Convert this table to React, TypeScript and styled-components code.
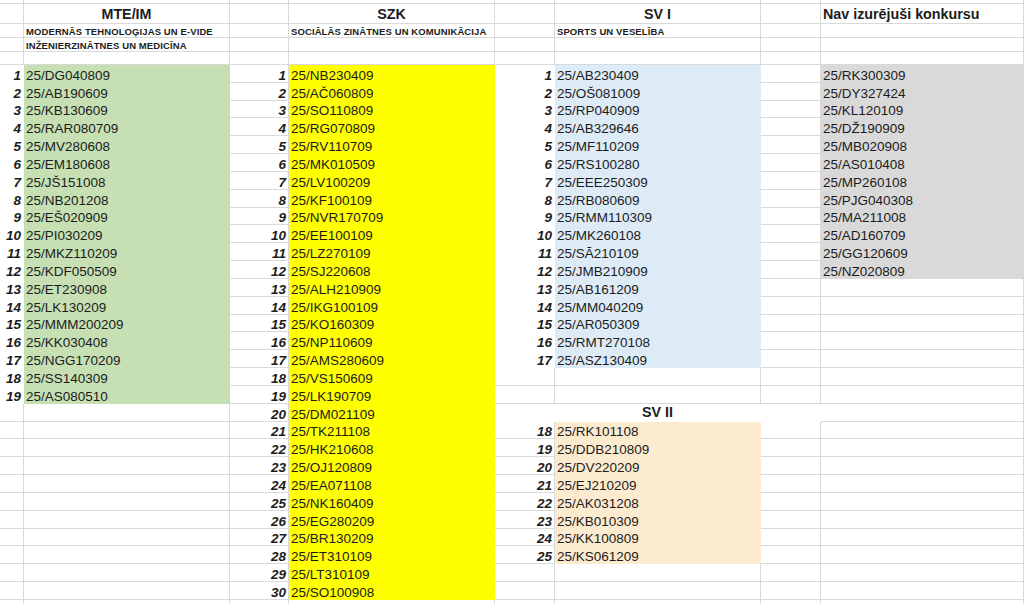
import React from 'react';
import styled, { createGlobalStyle, css } from 'styled-components';

const Global = createGlobalStyle`
  html, body { margin: 0; padding: 0; background: #ffffff; }
  body {
    width: 1024px;
    height: 604px;
    overflow: hidden;
    font-family: "Liberation Sans", Arial, sans-serif;
    color: #1c1c1c;
  }
`;

const GRID = '#d9d9d9';
const GREEN = '#c6e0b4';
const YELLOW = '#ffff00';
const BLUE = '#ddebf7';
const PEACH = '#fdebd0';
const GRAY = '#d9d9d9';
const WHITE = '#ffffff';

type Kind = 'blank' | 'code' | 'num' | 'title' | 'sub';

const Sheet = styled.div`
  display: grid;
  grid-template-columns: 24px 206px 59px 206px 60px 206px 60px 203px;
  grid-template-rows: 4px 20px 13.7px 14px 13.3px repeat(31, 17.83px);
  width: 1024px;
`;

const kindStyles: Record<Kind, ReturnType<typeof css>> = {
  blank: css``,
  code: css`
    font-size: 13.5px;
    line-height: 13px;
    padding-left: 2px;
  `,
  num: css`
    font-size: 13.5px;
    line-height: 13px;
    font-weight: 700;
    font-style: italic;
    padding-right: 2px;
  `,
  title: css`
    font-size: 14.3px;
    line-height: 16px;
    font-weight: 700;
    padding: 0 2px 1px 2px;
  `,
  sub: css`
    font-size: 9.5px;
    line-height: 11px;
    font-weight: 700;
    letter-spacing: 0.1px;
    padding-left: 2px;
  `,
};

const Cell = styled.div<{ $fill?: string; $kind: Kind; $center?: boolean }>`
  box-sizing: border-box;
  display: flex;
  align-items: flex-end;
  justify-content: ${(p) =>
    p.$kind === 'num' ? 'flex-end' : p.$center ? 'center' : 'flex-start'};
  min-width: 0;
  white-space: nowrap;
  overflow: visible;
  background: ${(p) => p.$fill ?? 'transparent'};
  border-right: 1px solid ${(p) => p.$fill ?? GRID};
  border-bottom: 1px solid ${(p) => p.$fill ?? GRID};
  ${(p) => kindStyles[p.$kind]}
`;

const MTE = [
  '25/DG040809', '25/AB190609', '25/KB130609', '25/RAR080709', '25/MV280608',
  '25/EM180608', '25/JŠ151008', '25/NB201208', '25/EŠ020909', '25/PI030209',
  '25/MKZ110209', '25/KDF050509', '25/ET230908', '25/LK130209', '25/MMM200209',
  '25/KK030408', '25/NGG170209', '25/SS140309', '25/AS080510',
];

const SZK = [
  '25/NB230409', '25/AČ060809', '25/SO110809', '25/RG070809', '25/RV110709',
  '25/MK010509', '25/LV100209', '25/KF100109', '25/NVR170709', '25/EE100109',
  '25/LZ270109', '25/SJ220608', '25/ALH210909', '25/IKG100109', '25/KO160309',
  '25/NP110609', '25/AMS280609', '25/VS150609', '25/LK190709', '25/DM021109',
  '25/TK211108', '25/HK210608', '25/OJ120809', '25/EA071108', '25/NK160409',
  '25/EG280209', '25/BR130209', '25/ET310109', '25/LT310109', '25/SO100908',
];

const SV1 = [
  '25/AB230409', '25/OŠ081009', '25/RP040909', '25/AB329646', '25/MF110209',
  '25/RS100280', '25/EEE250309', '25/RB080609', '25/RMM110309', '25/MK260108',
  '25/SĀ210109', '25/JMB210909', '25/AB161209', '25/MM040209', '25/AR050309',
  '25/RMT270108', '25/ASZ130409',
];

const SV2 = [
  '25/RK101108', '25/DDB210809', '25/DV220209', '25/EJ210209',
  '25/AK031208', '25/KB010309', '25/KK100809', '25/KS061209',
];

const NAV = [
  '25/RK300309', '25/DY327424', '25/KL120109', '25/DŽ190909', '25/MB020908',
  '25/AS010408', '25/MP260108', '25/PJG040308', '25/MA211008', '25/AD160709',
  '25/GG120609', '25/NZ020809',
];

type Spec = { kind: Kind; text?: string; fill?: string; center?: boolean };

const blank: Spec = { kind: 'blank' };

function buildRows(): Spec[][] {
  const rows: Spec[][] = [];
  const empty = () => Array.from({ length: 8 }, () => ({ ...blank }));

  rows.push(empty());

  const r1 = empty();
  r1[1] = { kind: 'title', text: 'MTE/IM', center: true };
  r1[3] = { kind: 'title', text: 'SZK', center: true };
  r1[5] = { kind: 'title', text: 'SV I', center: true };
  r1[7] = { kind: 'title', text: 'Nav izurējuši konkursu' };
  rows.push(r1);

  const r2 = empty();
  r2[1] = { kind: 'sub', text: 'MODERNĀS TEHNOLOĢIJAS UN E-VIDE' };
  r2[3] = { kind: 'sub', text: 'SOCIĀLĀS ZINĀTNES UN KOMUNIKĀCIJA' };
  r2[5] = { kind: 'sub', text: 'SPORTS UN VESELĪBA' };
  rows.push(r2);

  const r3 = empty();
  r3[1] = { kind: 'sub', text: 'INŽENIERZINĀTNES UN MEDICĪNA' };
  rows.push(r3);

  rows.push(empty());

  for (let r = 1; r <= 31; r++) {
    const row = empty();
    if (r <= MTE.length) {
      row[0] = { kind: 'num', text: String(r), fill: WHITE };
      row[1] = { kind: 'code', text: MTE[r - 1], fill: GREEN };
    }
    if (r <= SZK.length) {
      row[2] = { kind: 'num', text: String(r) };
      row[3] = { kind: 'code', text: SZK[r - 1], fill: YELLOW };
    }
    if (r <= SV1.length) {
      row[4] = { kind: 'num', text: String(r), fill: WHITE };
      row[5] = { kind: 'code', text: SV1[r - 1], fill: BLUE };
    }
    if (r === 20) {
      row[4] = { kind: 'blank', fill: WHITE };
      row[5] = { kind: 'title', text: 'SV II', center: true, fill: WHITE };
      row[6] = { kind: 'blank', fill: WHITE };
    }
    if (r >= 21 && r < 21 + SV2.length) {
      row[4] = { kind: 'num', text: String(r - 3) };
      row[5] = { kind: 'code', text: SV2[r - 21], fill: PEACH };
    }
    if (r <= NAV.length) {
      row[7] = { kind: 'code', text: NAV[r - 1], fill: GRAY };
    }
    rows.push(row);
  }
  return rows;
}

const ROWS = buildRows();

export default function App() {
  return (
    <>
      <Global />
      <Sheet>
        {ROWS.map((row, ri) =>
          row.map((c, ci) => (
            <Cell key={`${ri}-${ci}`} $kind={c.kind} $fill={c.fill} $center={c.center}>
              {c.text}
            </Cell>
          ))
        )}
      </Sheet>
    </>
  );
}
